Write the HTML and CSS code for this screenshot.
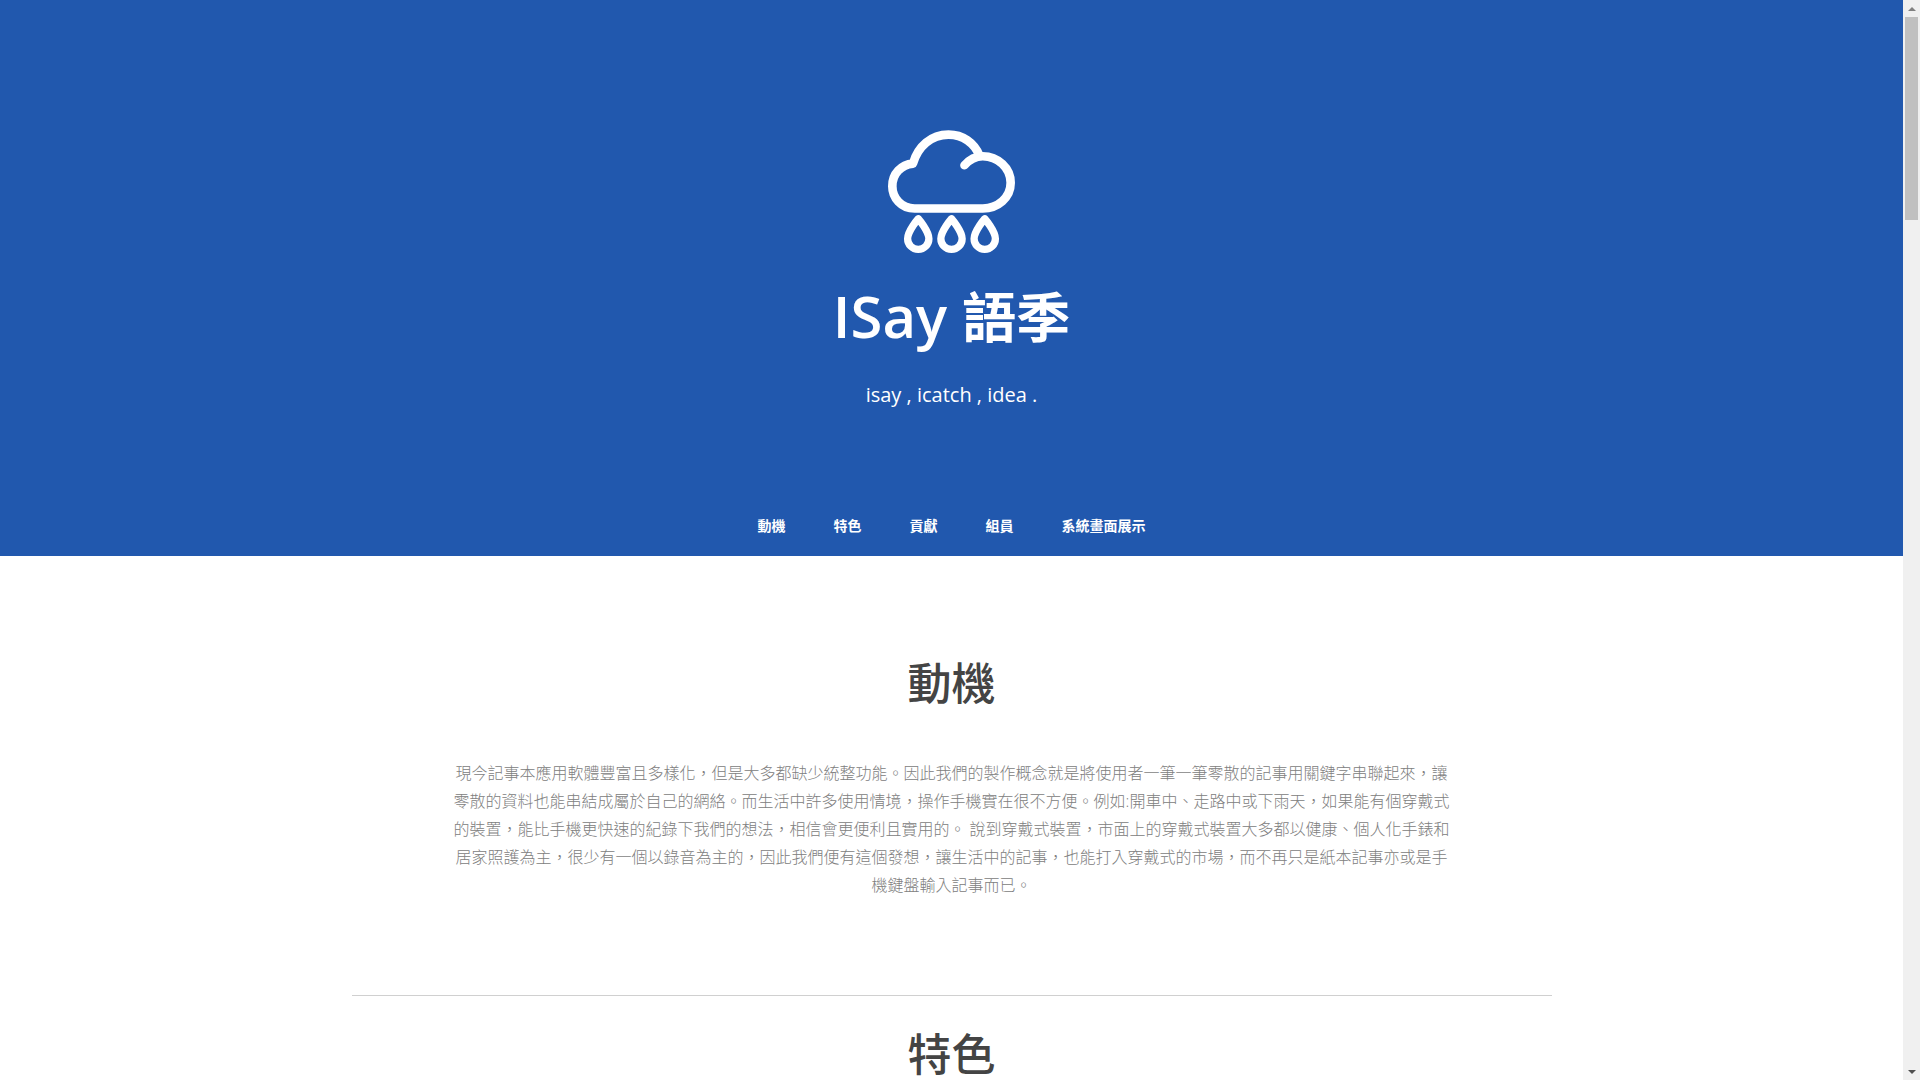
FILE: index.html
```html
<!DOCTYPE html>
<html lang="zh-Hant">
<head>
<meta charset="utf-8">
<title>ISay 語季</title>
<link rel="stylesheet" href="styles.css">
</head>
<body>
<div class="page">
<header class="hero">
  <svg class="logo" viewBox="320 88 392 376" aria-hidden="true">
    <path class="cloud" d="M555 197C570 180 588 170 610 170C655 170 694 205 694 250C694 295 655 327 610 327L405 327C365 327 338 295 338 260C338 222 365 195 400 192C415 140 455 105 507 105C550 105 585 130 600 168"/>
    <path class="drop" d="M416 358C416 358 384 395 384 418A32 32 0 0 0 448 418C448 395 416 358 416 358Z"/>
    <path class="drop" d="M516 358C516 358 484 395 484 418A32 32 0 0 0 548 418C548 395 516 358 516 358Z"/>
    <path class="drop" d="M616 358C616 358 584 395 584 418A32 32 0 0 0 648 418C648 395 616 358 616 358Z"/>
  </svg>
  <h1 class="title">ISay <span class="title-cjk">語季</span></h1>
  <p class="tagline">isay , icatch , idea .</p>
  <nav class="nav">
    <a href="#motive">動機</a>
    <a href="#feature">特色</a>
    <a href="#contrib">貢獻</a>
    <a href="#member">組員</a>
    <a href="#demo">系統畫面展示</a>
  </nav>
</header>
<main class="content">
  <section class="section" id="motive">
    <h2 class="heading">動機</h2>
    <p class="body-text">現今記事本應用軟體豐富且多樣化，但是大多都缺少統整功能。因此我們的製作概念就是將使用者一筆一筆零散的記事用關鍵字串聯起來，讓零散的資料也能串結成屬於自己的網絡。而生活中許多使用情境，操作手機實在很不方便。例如:開車中、走路中或下雨天，如果能有個穿戴式的裝置，能比手機更快速的紀錄下我們的想法，相信會更便利且實用的。 說到穿戴式裝置，市面上的穿戴式裝置大多都以健康、個人化手錶和居家照護為主，很少有一個以錄音為主的，因此我們便有這個發想，讓生活中的記事，也能打入穿戴式的市場，而不再只是紙本記事亦或是手機鍵盤輸入記事而已。</p>
  </section>
  <section class="section section-ruled" id="feature">
    <h2 class="heading">特色</h2>
  </section>
</main>
</div>
<div class="scrollbar" aria-hidden="true">
  <div class="scroll-btn"><span class="arrow-up"></span></div>
  <div class="scroll-track"><div class="scroll-thumb"></div></div>
  <div class="scroll-btn"><span class="arrow-down"></span></div>
</div>
</body>
</html>
```
FILE: styles.css
```css
body {
  margin: 0;
  font-family: "Open Sans", "Noto Sans CJK TC", sans-serif;
  background: #fff;
  color: #808080;
}
.page {
  margin-right: 17px;
}
.hero {
  background: #2158ae;
  color: #fff;
  height: 556px;
  display: flex;
  flex-direction: column;
  align-items: center;
  padding-top: 129px;
  box-sizing: border-box;
}
.logo {
  width: 131px;
  height: 125px;
  display: block;
}
.cloud, .drop {
  fill: none;
  stroke: #fff;
  stroke-linecap: round;
  stroke-linejoin: round;
}
.cloud { stroke-width: 26; }
.drop { stroke-width: 22; }
.title {
  margin: 24px 0 0;
  font-size: 58px;
  line-height: 76px;
  font-weight: 600;
}
.title-cjk {
  font-size: 54px;
}
.tagline {
  margin: 25px 0 0;
  font-size: 20px;
  line-height: 30px;
}
.nav {
  margin-top: auto;
  display: flex;
  height: 62px;
  align-items: center;
}
.nav a {
  color: #fff;
  text-decoration: none;
  font-size: 14px;
  font-weight: 700;
  padding: 0 24px;
}
.content {
  width: 1200px;
  margin: 0 auto;
  min-height: 5004px;
}
.section {
  padding: 96px 100px 96px;
  text-align: center;
}
.section-ruled {
  border-top: 1px solid #d0d0d0;
  padding-top: 27px;
}
.heading {
  margin: 0;
  font-size: 44px;
  line-height: 62px;
  font-weight: 500;
  color: #444;
}
.body-text {
  margin: 45px 0 0;
  font-size: 16px;
  line-height: 28px;
  font-weight: 300;
}
.scrollbar {
  position: fixed;
  top: 0;
  right: 0;
  bottom: 0;
  width: 17px;
  background: #f0f0f0;
  display: flex;
  flex-direction: column;
}
.scroll-btn {
  height: 17px;
  display: flex;
  align-items: center;
  justify-content: center;
}
.arrow-up, .arrow-down {
  width: 0;
  height: 0;
  border-left: 4px solid transparent;
  border-right: 4px solid transparent;
}
.arrow-up {
  border-bottom: 4px solid #808080;
}
.arrow-down {
  border-top: 4px solid #505050;
}
.scroll-track {
  flex: 1;
  padding: 0 2px;
}
.scroll-thumb {
  height: 203px;
  background: #c0c0c0;
}
```
